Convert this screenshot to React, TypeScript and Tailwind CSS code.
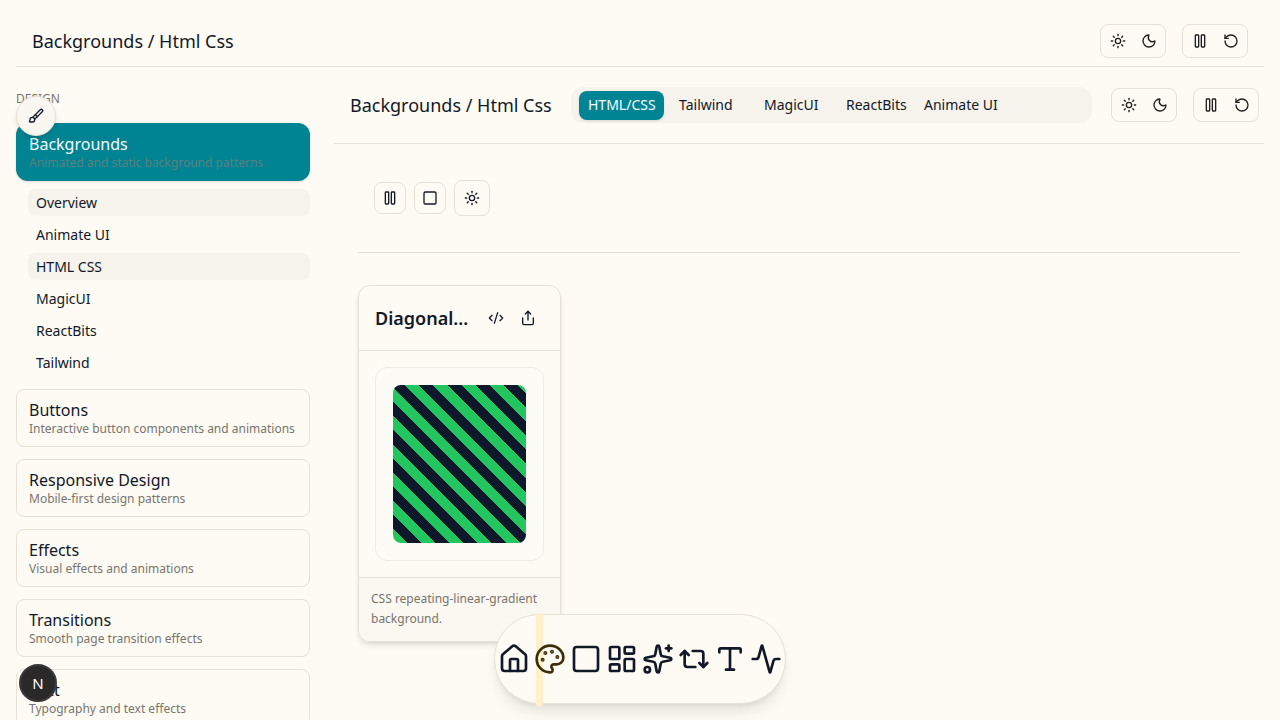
import { Activity, Brush, CodeXml, House, LayoutDashboard, Moon, Palette, Pause, Repeat2, RotateCcw, Share, Sparkles, Square, Sun, Type } from "lucide-react";

const subItems = [
    { label: "Overview", shaded: true },
    { label: "Animate UI", shaded: false },
    { label: "HTML CSS", shaded: true },
    { label: "MagicUI", shaded: false },
    { label: "ReactBits", shaded: false },
    { label: "Tailwind", shaded: false },
];

const sections = [
    { title: "Buttons", text: "Interactive button components and animations" },
    { title: "Responsive Design", text: "Mobile-first design patterns" },
    { title: "Effects", text: "Visual effects and animations" },
    { title: "Transitions", text: "Smooth page transition effects" },
    { title: "Text", text: "Typography and text effects" },
];

const tabs = [
    { label: "Tailwind", width: "w-[79px]" },
    { label: "MagicUI", width: "w-[76px]" },
    { label: "ReactBits", width: "w-[72px]" },
    { label: "Animate UI", width: "w-[85px]" },
];

const dockIcons = [House, Palette, Square, LayoutDashboard, Sparkles, Repeat2, Type, Activity];

function Controls() {
    return (
        <div className="flex gap-4 text-[#1f1f1f]">
            <div className="flex h-[34px] w-[66px] items-center justify-around rounded-lg border border-[#e6e1d5] px-[1px]">
                <Sun size={16} />
                <Moon size={16} />
            </div>
            <div className="flex h-[34px] w-[66px] items-center justify-around rounded-lg border border-[#e6e1d5] px-[1px]">
                <Pause size={16} />
                <RotateCcw size={16} />
            </div>
        </div>
    );
}

export default function App() {
    return (
        <div className="relative h-screen overflow-hidden bg-[#fefbf4] px-4 font-['Noto_Sans',sans-serif] text-[#111827]">
            <header className="flex h-[67px] items-center justify-between border-b border-[#e6e1d5] pl-4 pr-4 pt-[16px]">
                <h1 className="text-[18px]">Backgrounds / Html Css</h1>
                <Controls />
            </header>

            <div className="flex gap-6">
                <aside className="w-[294px] shrink-0 pt-[24px]">
                    <p className="h-[16px] text-xs leading-4 text-[#78756d]">DESIGN</p>
                    <div className="mt-[16px] h-[58px] rounded-xl bg-[#008493] px-[13px] py-[10px] shadow-sm">
                        <p className="text-base leading-[22px] text-[#f4fbfa]">Backgrounds</p>
                        <p className="text-xs leading-[16px] text-[#5c7f80]">Animated and static background patterns</p>
                    </div>
                    <ul className="mt-[8px] ml-3 flex flex-col gap-[5px]">
                        {subItems.map((item) => (
                            <li key={item.label} className={`flex h-[27px] items-center rounded-lg px-2 text-sm ${item.shaded ? "bg-[#f6f3ec]" : ""}`}>
                                {item.label}
                            </li>
                        ))}
                    </ul>
                    <div className="mt-[13px] flex flex-col gap-3">
                        {sections.map((section) => (
                            <div key={section.title} className="h-[58px] shrink-0 rounded-lg border border-[#e6e1d5] px-3 py-[9px]">
                                <p className="text-base leading-[22px]">{section.title}</p>
                                <p className="text-xs leading-[16px] text-[#78756d]">{section.text}</p>
                            </div>
                        ))}
                    </div>
                </aside>

                <main className="min-w-0 flex-1">
                    <div className="flex h-[77px] items-center gap-[19px] border-b border-[#e6e1d5] pl-4 pt-[-1px]">
                        <h2 className="w-[202px] shrink-0 text-[18px]">Backgrounds / Html Css</h2>
                        <div className="flex h-9 w-[521px] shrink-0 items-center gap-[6px] rounded-xl bg-[#f6f3ec] pl-2 text-sm">
                            <span className="flex h-[29px] w-[85px] items-center rounded-lg bg-[#008493] pl-[9px] text-[#f4fbfa] shadow-sm">HTML/CSS</span>
                            {tabs.map((tab) => (
                                <span key={tab.label} className={`${tab.width} pl-[9px] whitespace-nowrap`}>{tab.label}</span>
                            ))}
                        </div>
                        <div className="ml-auto pr-4">
                            <Controls />
                        </div>
                    </div>

                    <div className="px-6">
                        <div className="flex h-[109px] items-center gap-2 border-b border-[#e6e1d5] pl-4 pt-[-2px]">
                            <button className="flex h-8 w-8 items-center justify-center rounded-lg border border-[#e6e1d5]"><Pause size={16} /></button>
                            <button className="flex h-8 w-8 items-center justify-center rounded-lg border border-[#e6e1d5]"><Square size={16} /></button>
                            <button className="flex h-9 w-9 items-center justify-center rounded-lg border border-[#e6e1d5]"><Sun size={16} /></button>
                        </div>

                        <div className="mt-[32px] flex h-[357px] w-[203px] flex-col rounded-xl border border-[#e6e1d5] shadow-md">
                            <div className="flex h-[65px] items-center justify-between border-b border-[#e6e1d5] pl-4 pr-[24px]">
                                <h3 className="text-[18px] font-semibold">Diagonal...</h3>
                                <div className="flex gap-4">
                                    <CodeXml size={16} />
                                    <Share size={16} />
                                </div>
                            </div>
                            <div className="flex-1 p-4">
                                <div className="h-[194px] rounded-xl border border-[#f0ece2] bg-[#fdfbf6] p-[17px]">
                                    <div className="h-[158px] rounded-lg bg-[repeating-linear-gradient(45deg,#22c55e_0,#22c55e_10px,#0f172a_10px,#0f172a_20px)]"></div>
                                </div>
                            </div>
                            <div className="h-[64px] rounded-b-xl border-t border-[#e6e1d5] bg-[#faf8f1] px-3 py-[11px] text-xs leading-5 text-[#78756d]">
                                CSS repeating-linear-gradient background.
                            </div>
                        </div>
                    </div>
                </main>
            </div>

            <button className="absolute left-4 top-[96px] flex h-10 w-10 items-center justify-center rounded-full border border-[#e6e1d5] bg-[#f9f7f1] shadow-md"><Brush size={16} /></button>

            <div className="absolute left-[19px] top-[664px] flex h-[38px] w-[38px] items-center justify-center rounded-full border-2 border-[#3a3a3a] bg-[#292929] text-[15px] text-white">N</div>

            <div className="absolute left-[494px] top-[614px] flex h-[90px] w-[292px] items-center justify-center rounded-full border border-[#e6e1d5] bg-[#fefbf4] shadow-lg">
                <span className="absolute left-[41px] top-[-2px] h-[94px] w-[7px] rounded-full bg-[#fff0cc]"></span>
                {dockIcons.map((Icon, i) => (
                    <span key={i} className="relative flex w-9 justify-center">
                        <Icon size={32} strokeWidth={2} className={i === 1 ? "text-[#3b2c0a]" : ""} />
                    </span>
                ))}
            </div>
        </div>
    );
}
